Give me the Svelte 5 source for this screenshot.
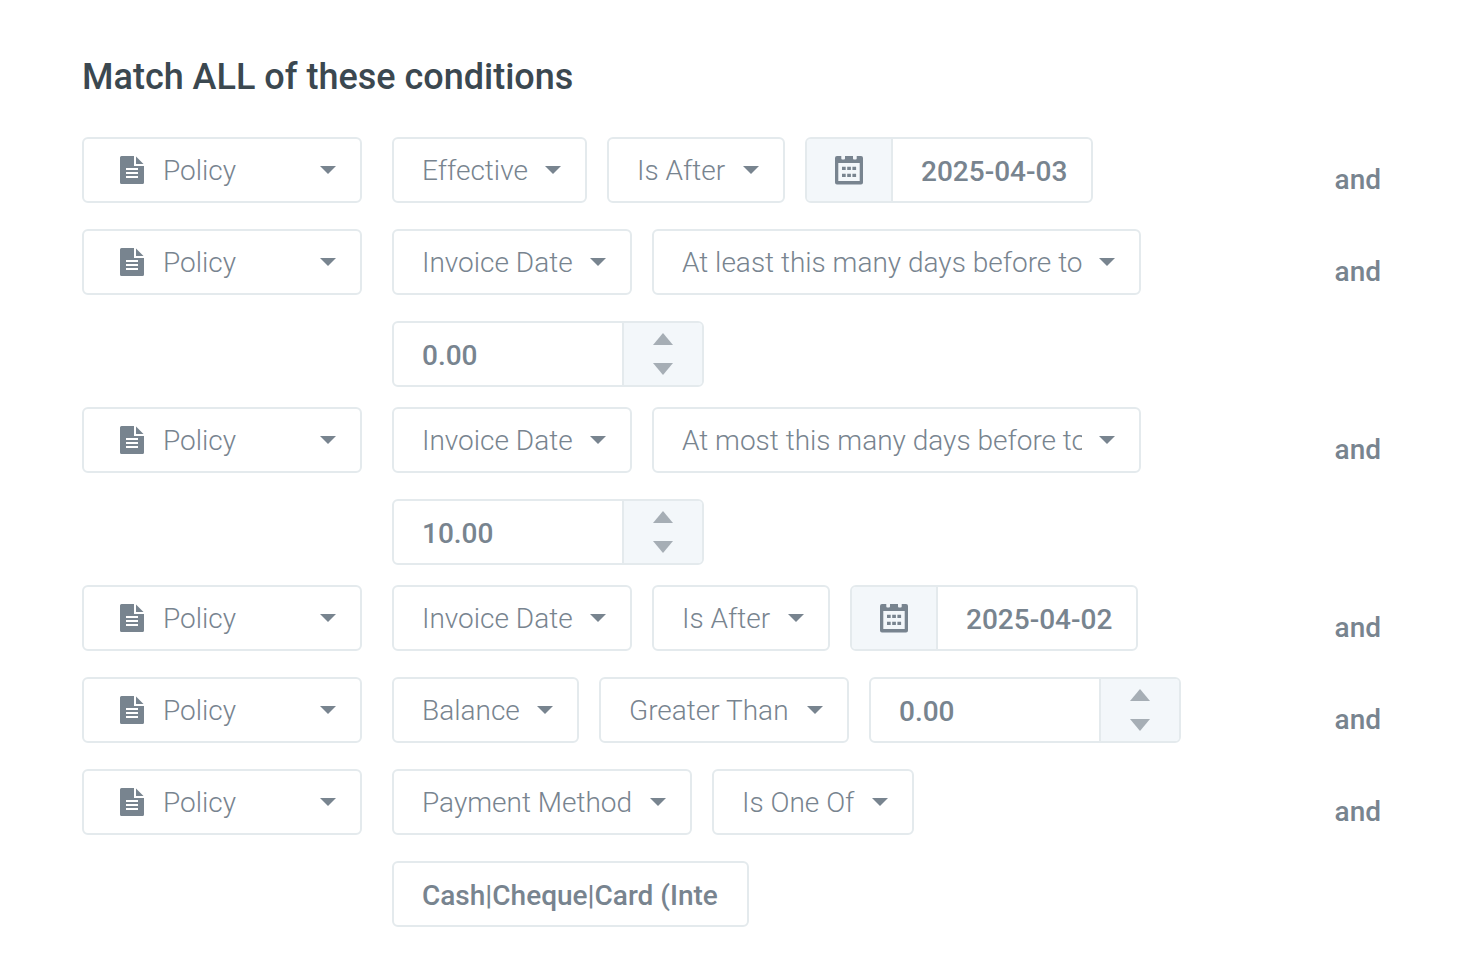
<script>
  const conditions = [
    { id: 1, entity: "Policy", field: "Effective", operator: "Is After", type: "date", value: "2025-04-03" },
    { id: 2, entity: "Policy", field: "Invoice Date", operator: "At least this many days before today", type: "number", value: "0.00" },
    { id: 3, entity: "Policy", field: "Invoice Date", operator: "At most this many days before today", type: "number", value: "10.00" },
    { id: 4, entity: "Policy", field: "Invoice Date", operator: "Is After", type: "date", value: "2025-04-02" },
    { id: 5, entity: "Policy", field: "Balance", operator: "Greater Than", type: "number", value: "0.00" },
    { id: 6, entity: "Policy", field: "Payment Method", operator: "Is One Of", type: "text", value: "Cash|Cheque|Card (Internal)|Direct Debit" },
  ]

  let rows = $state(conditions)

  function step(row, amount) {
    row.value = (Number(row.value) + amount).toFixed(2)
  }
</script>

{#snippet dropdown(label, value)}
  <select aria-label={label}>
    <option>{value}</option>
  </select>
  <svg class="caret" viewBox="0 0 16 8" aria-hidden="true"><path d="M0 0h16L8 8z" /></svg>
{/snippet}

<main>
  <h1>Match ALL of these conditions</h1>

  {#each rows as row (row.id)}
    <div class="row">
      <div class="select entity">
        <svg class="doc" viewBox="0 0 24 28" aria-hidden="true">
          <path fill-rule="evenodd" d="M1.500 0H14V10H24V26.500Q24 28 22.500 28H1.500Q0 28 0 26.500V1.500Q0 0 1.500 0zM6 12v2h12v-2zM6 16v2h12v-2zM6 20v2h12v-2z" />
          <path d="M16 .5L23.500 8H16z" />
        </svg>
        {@render dropdown("Entity", row.entity)}
      </div>

      <div class="fields">
        <div class="select">{@render dropdown("Field", row.field)}</div>
        <div class="select">{@render dropdown("Operator", row.operator)}</div>

        {#if row.type == "date"}
          <div class="group">
            <button class="addon calendar" aria-label="Pick a date">
              <svg viewBox="0 0 28 29" aria-hidden="true">
                <path fill-rule="evenodd" d="M2 0H6.300V2.500Q6.300 3.500 7.300 3.500H9Q10 3.500 10 2.500V0H18V2.500Q18 3.500 19 3.500H20.700Q21.700 3.500 21.700 2.500V0H26Q28 0 28 2V26.500Q28 28.500 26 28.500H2Q0 28.500 0 26.500V2Q0 0 2 0zM3.300 7V25H24.700V7z" />
                <path d="M7 10.700h3.700v3.300H7zM12.200 10.700h3.700v3.300h-3.700zM17.400 10.700h3.700v3.300h-3.700zM7 17.700h3.700v3.300H7zM12.200 17.700h3.700v3.300h-3.700zM17.400 17.700h3.700v3.300h-3.700z" />
              </svg>
            </button>
            <input class="date" aria-label="Date" bind:value={row.value} />
          </div>
        {:else if row.type == "number"}
          <div class="group">
            <input class="number" inputmode="decimal" aria-label="Number" bind:value={row.value} />
            <div class="addon spinner">
              <button aria-label="Increase" onclick={() => step(row, 1)}>
                <svg viewBox="0 0 20 12" aria-hidden="true"><path d="M10 0l10 12H0z" /></svg>
              </button>
              <button aria-label="Decrease" onclick={() => step(row, -1)}>
                <svg viewBox="0 0 20 12" aria-hidden="true"><path d="M0 0h20L10 12z" /></svg>
              </button>
            </div>
          </div>
        {:else}
          <div class="group">
            <input class="text" aria-label="Values" bind:value={row.value} />
          </div>
        {/if}
      </div>

      <span class="joiner">and</span>
    </div>
  {/each}
</main>

<style>
  :global(body) {
    margin: 0;
    background: #fff;
  }

  main {
    padding: 49px 85px 24px 82px;
    font-family: Roboto, sans-serif;
    font-size: 28px;
    color: #78848f;
  }

  h1 {
    margin: 0 0 32px;
    font-size: 36px;
    line-height: 56px;
    font-weight: 500;
    color: #3b4850;
  }

  .row {
    display: flex;
    align-items: flex-start;
    margin-bottom: 20px;
  }

  .fields {
    flex: 1;
    display: flex;
    flex-wrap: wrap;
    gap: 20px;
    margin: 0 100px 0 30px;
  }

  select,
  input,
  button {
    box-sizing: border-box;
    margin: 0;
    border: 0;
    background: none;
    font: inherit;
    color: inherit;
  }

  svg {
    display: block;
    fill: currentColor;
  }

  .select,
  .group {
    box-sizing: border-box;
    height: 66px;
    border: 2px solid #e4eaed;
    border-radius: 6px;
    background: #fff;
    overflow: hidden;
  }

  .select {
    display: grid;
    align-items: center;
    margin-bottom: 6px;
  }

  .select > * {
    grid-area: 1 / 1;
  }

  select {
    appearance: none;
    width: 100%;
    max-width: 485px;
    height: 62px;
    padding: 0 57px 0 28px;
    font-weight: 300;
    cursor: pointer;
  }

  .caret {
    width: 16px;
    height: 8px;
    margin-right: 24px;
    justify-self: end;
    pointer-events: none;
  }

  .entity {
    width: 280px;
    flex: none;
  }

  .entity select {
    padding-left: 79px;
  }

  .doc {
    width: 24px;
    height: 28px;
    margin-left: 36px;
    pointer-events: none;
  }

  .group {
    display: flex;
  }

  input {
    height: 62px;
    padding: 2px 28px 0;
    font-weight: 500;
  }

  .date {
    width: 198px;
    padding-right: 20px;
  }

  .number {
    width: 228px;
  }

  .text {
    width: 353px;
  }

  .addon {
    background: #f3f7fa;
    border: 0 solid #e4eaed;
  }

  .calendar {
    width: 86px;
    padding: 0 28px;
    border-right-width: 2px;
    cursor: pointer;
  }

  .calendar svg {
    width: 28px;
    height: 29px;
  }

  .spinner {
    box-sizing: border-box;
    width: 80px;
    border-left-width: 2px;
    display: flex;
    flex-direction: column;
    justify-content: center;
    color: #a6aeb5;
  }

  .spinner button {
    height: 30px;
    padding: 0;
    display: flex;
    align-items: center;
    justify-content: center;
    cursor: pointer;
  }

  .spinner svg {
    width: 20px;
    height: 12px;
  }

  .joiner {
    padding-top: 16px;
    line-height: 54px;
    font-weight: 500;
  }
</style>
